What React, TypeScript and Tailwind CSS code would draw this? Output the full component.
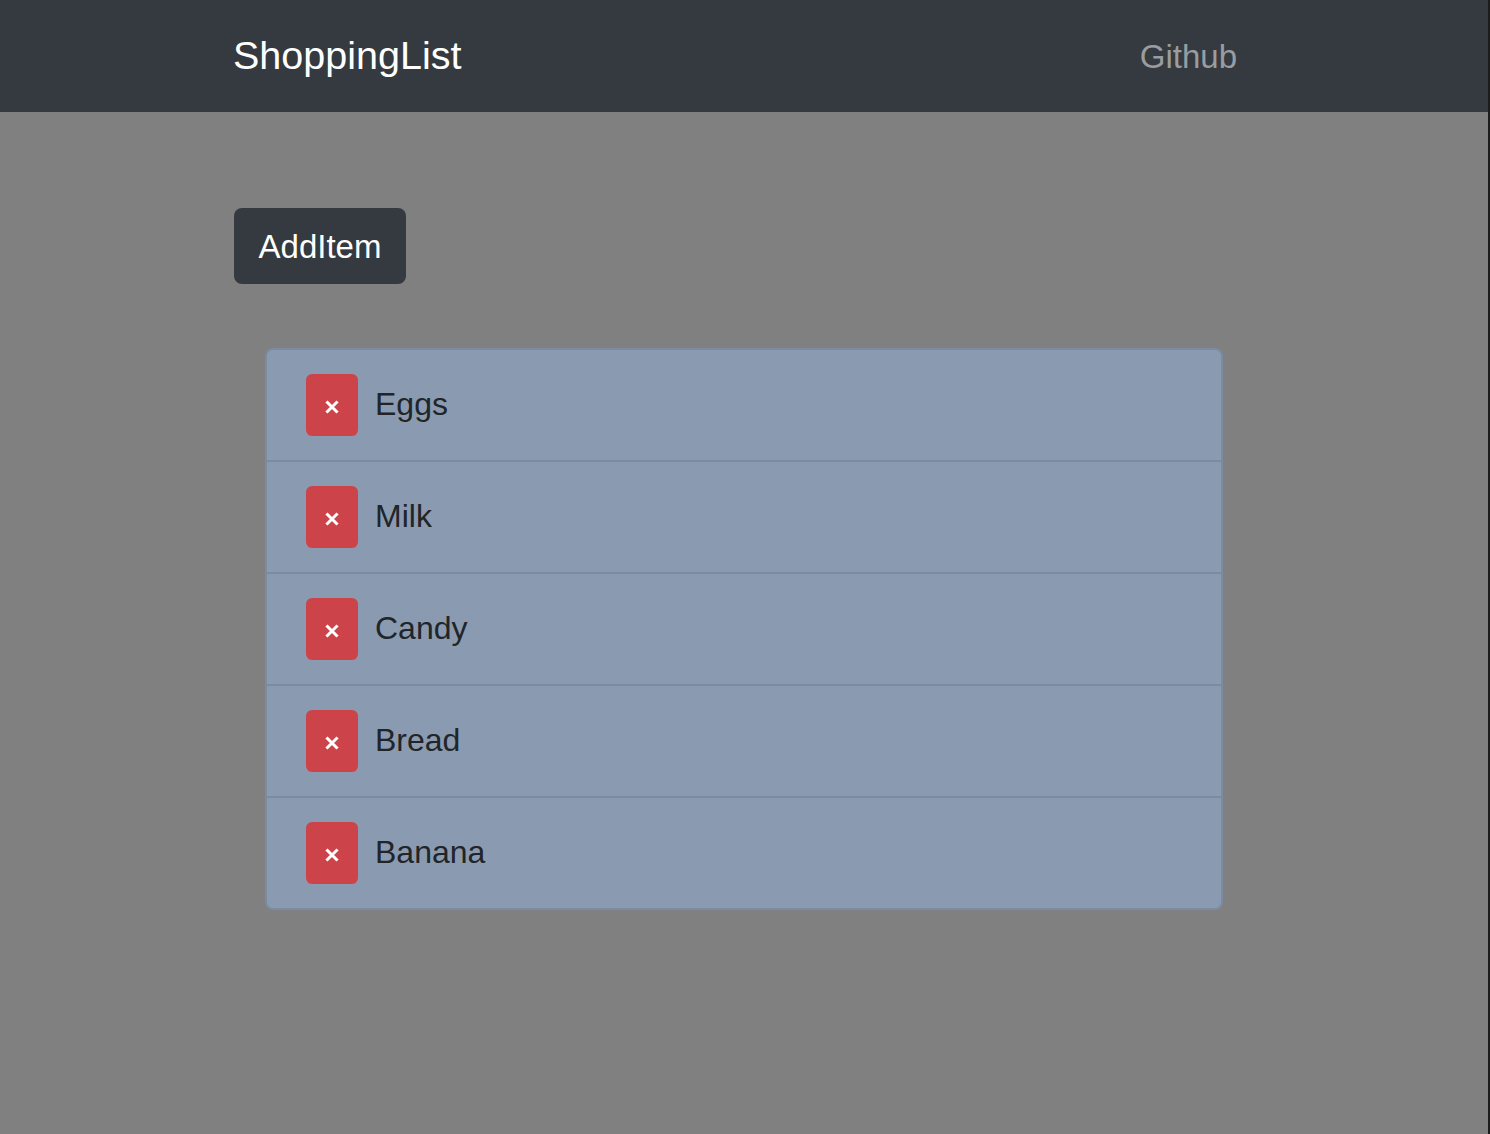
const items = ["Eggs", "Milk", "Candy", "Bread", "Banana"];

const CloseIcon = () => (
  <svg width="14" height="14" viewBox="0 0 14 14" className="mt-[4px]">
    <path d="M2.5 2.5 L11.5 11.5 M11.5 2.5 L2.5 11.5" stroke="white" strokeWidth="3" strokeLinecap="square" />
  </svg>
);

const App = () => {
  return (
    <div className="flex min-h-[1134px] w-full bg-[#808080] font-['Liberation_Sans',Arial,sans-serif]">
      <div className="flex-1 flex flex-col">
        {/* Navbar */}
        <nav className="h-[112px] bg-[#343a40] flex items-center">
          <div className="ml-[233px] w-[1004px] flex items-center justify-between">
            <span className="text-[39.5px] text-white leading-none">ShoppingList</span>
            <a className="text-[33px] text-[#9a9da0] leading-none">Github</a>
          </div>
        </nav>

        {/* Content */}
        <main className="ml-[234px] pt-[96px]">
          <button className="h-[76px] w-[172px] rounded-[8px] bg-[#343a40] text-white text-[33px] leading-none flex items-center justify-center">
            AddItem
          </button>

          <ul className="mt-[64px] ml-[31px] w-[958px] rounded-[8px] border-2 border-[#7a8ba2] bg-[#8a9bb1] overflow-hidden">
            {items.map((item, i) => (
              <li
                key={item}
                className={
                  "box-content h-[110px] flex items-center pl-[39px] " +
                  (i > 0 ? "border-t-2 border-[#7a8ba2]" : "")
                }
              >
                <span className="w-[52px] h-[62px] rounded-[6px] bg-[#cc444a] flex items-center justify-center">
                  <CloseIcon />
                </span>
                <span className="ml-[17px] text-[32px] text-[#212529] leading-none mt-[-3px]">{item}</span>
              </li>
            ))}
          </ul>
        </main>
      </div>
      <div className="w-[2px] bg-[#1c1c1c]" />
    </div>
  );
};

export default App;
